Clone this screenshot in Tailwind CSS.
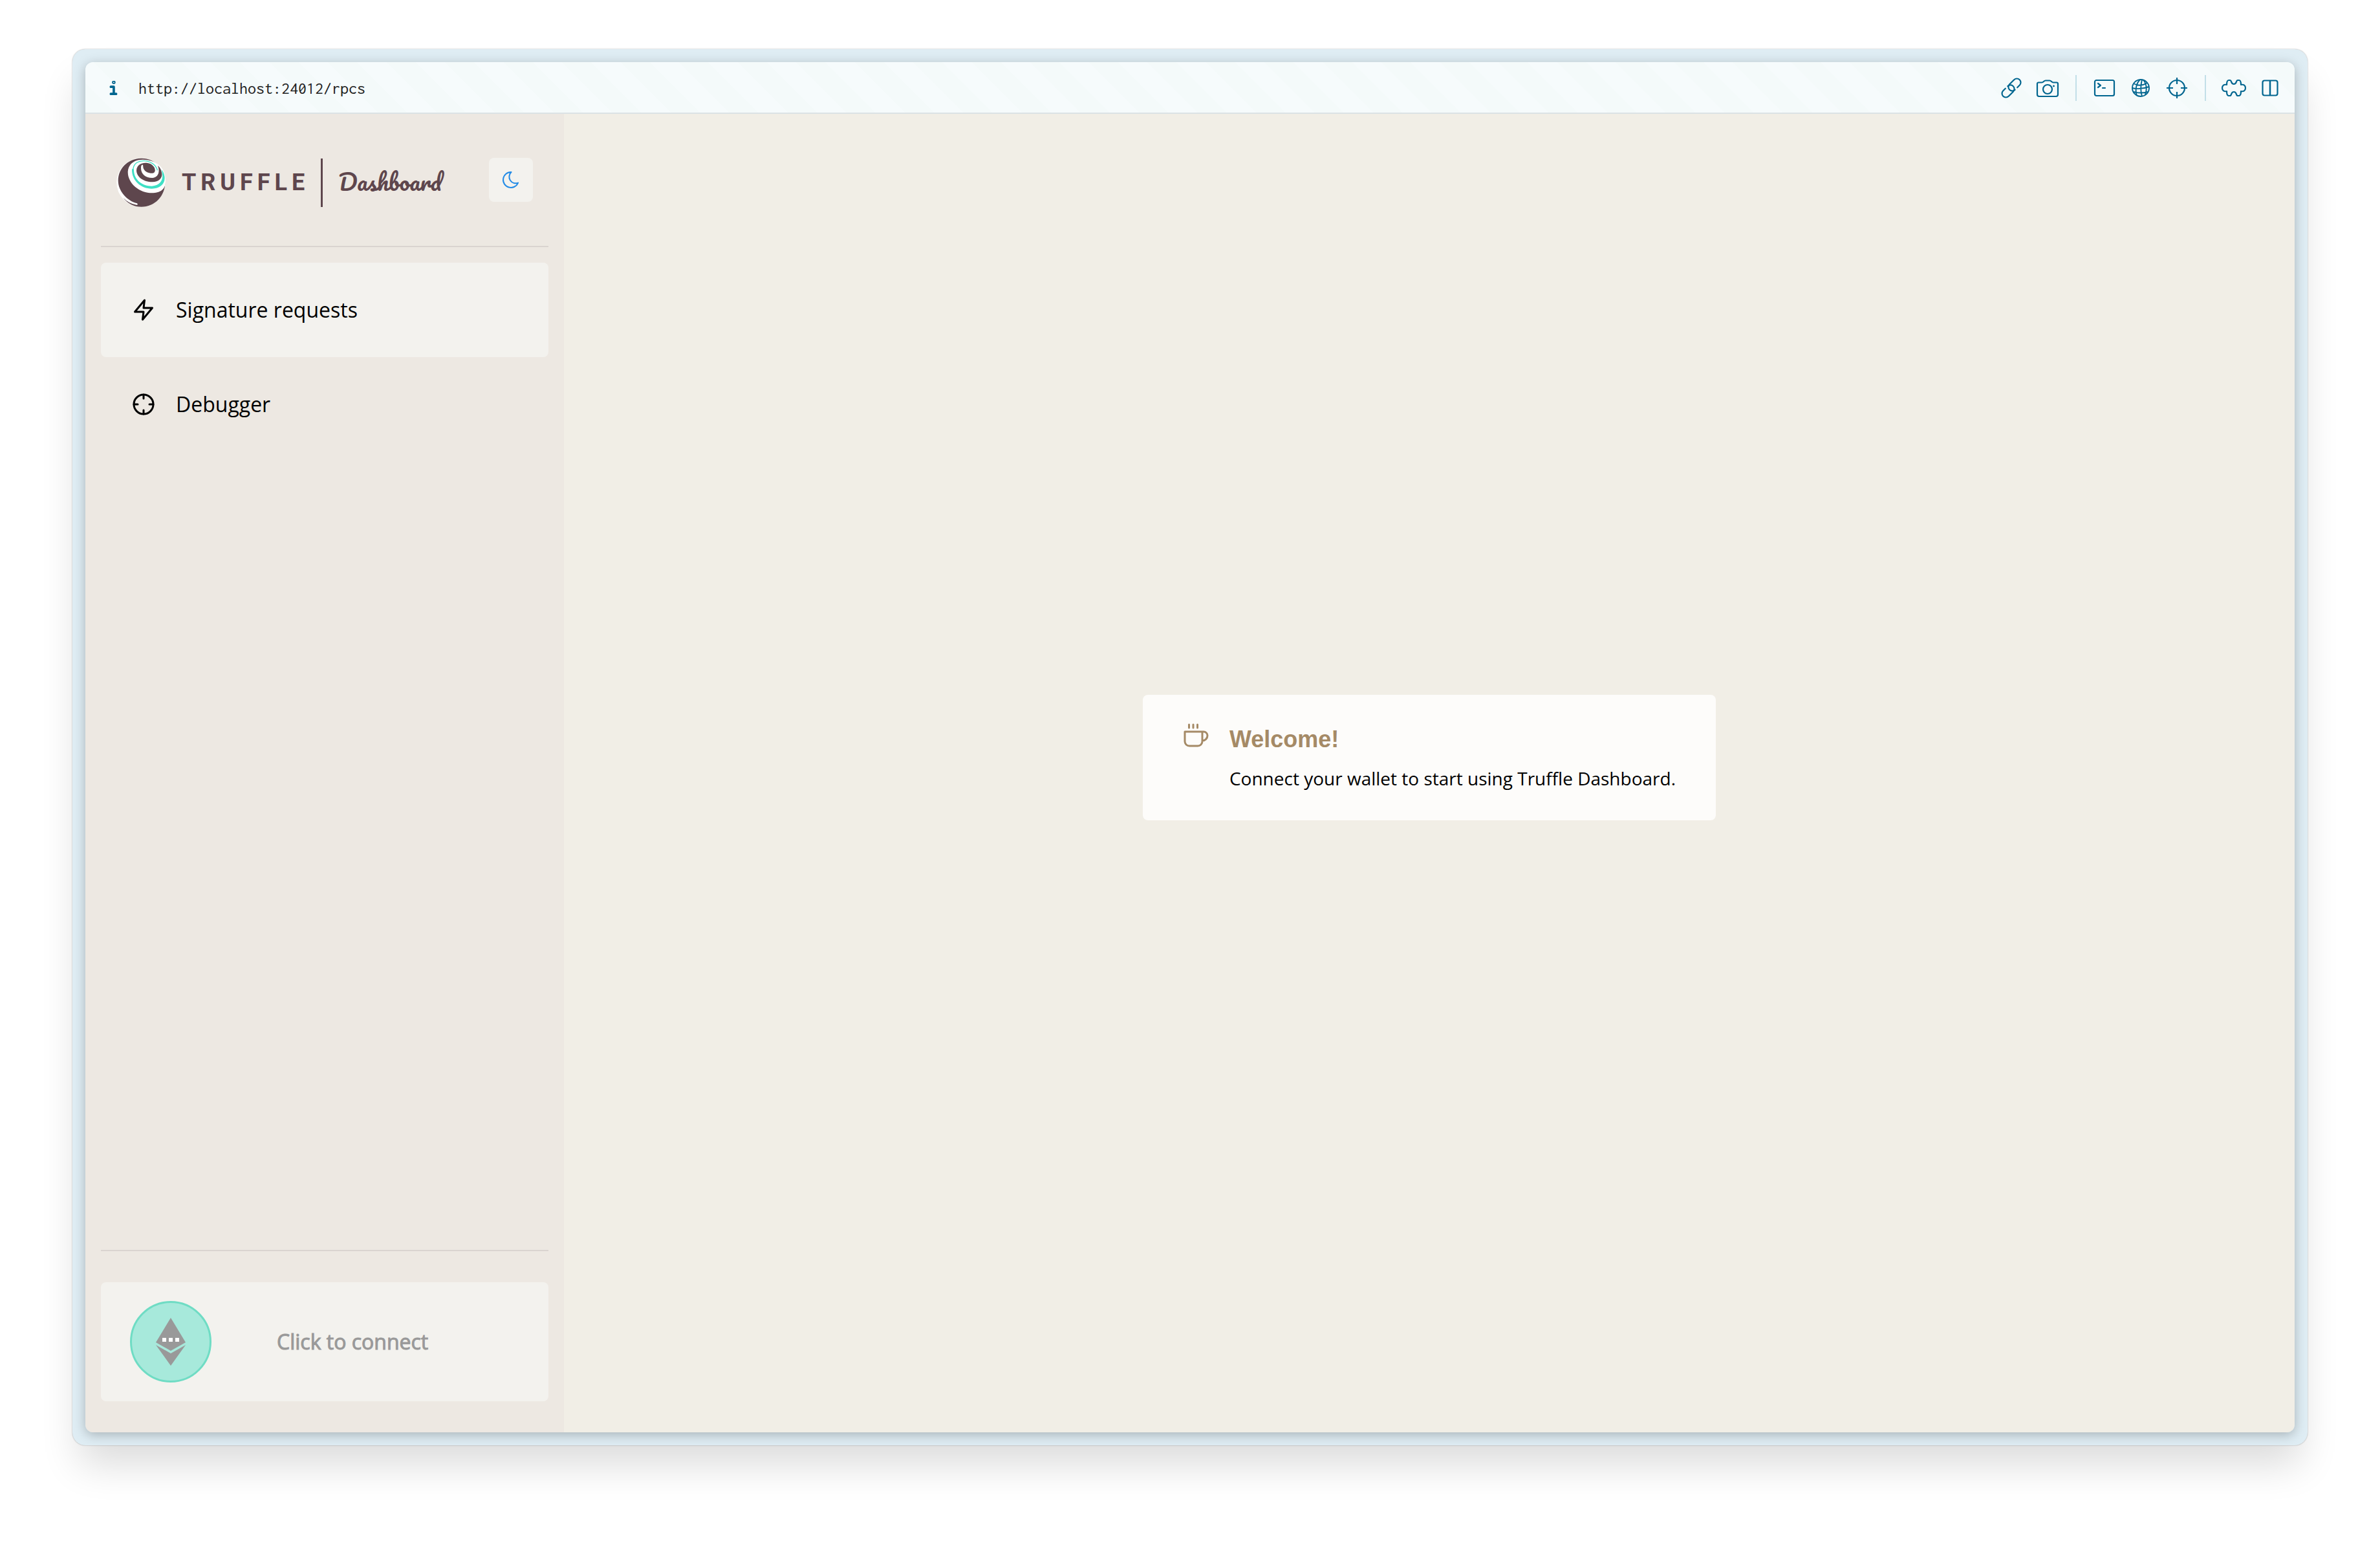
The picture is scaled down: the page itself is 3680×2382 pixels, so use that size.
<!DOCTYPE html>
<html lang="en">
<head>
<meta charset="utf-8">
<title>Truffle Dashboard</title>
<script src="https://cdn.jsdelivr.net/npm/@tailwindcss/browser@4"></script>
</head>
<body class="flex min-h-screen bg-white px-28 pt-[76px] pb-[148px] font-['Open_Sans',sans-serif] text-black">
<div class="flex flex-1 rounded-[20px] bg-[#dfedf4] p-5 shadow-[0_0_2px_rgba(0,0,0,0.35),0_40px_60px_-10px_rgba(0,0,0,0.14)]">
<div class="flex flex-1 flex-col overflow-hidden rounded-xl shadow-[0_4px_18px_rgba(0,0,0,0.25)]">

  <header class="flex h-20 items-center border-b-2 border-[#dbe2e5] bg-[repeating-linear-gradient(45deg,#f4fafa_0_32px,#f6fbfc_32px_64px)] pt-0.5 pr-2.5 pl-8 text-[#00658f]">
    <svg class="mr-7 size-[22px]" viewBox="0 0 22 24" fill="none" stroke="currentColor" stroke-width="4" stroke-linecap="round" stroke-linejoin="round"><path d="M7 10h5v11M7 22h9"/><circle cx="12" cy="2.500" r="1"/></svg>
    <span class="flex-1 font-[Inconsolata,'Liberation_Mono',monospace] text-[26px] text-[#222]">http://localhost:24012/rpcs</span>
    <button aria-label="Link" class="flex w-14 justify-center"><svg class="size-9" viewBox="0 0 36 36" fill="none" stroke="currentColor" stroke-width="2.200" stroke-linecap="round"><g transform="rotate(-45 18 18)"><path d="M25 24h5a6 6 0 0 0 0-12H20a6 6 0 0 0 0 12"/><path d="M11 12H6a6 6 0 0 0 0 12h10a6 6 0 0 0 0-12"/></g></svg></button>
    <button aria-label="Screenshot" class="flex w-14 justify-center"><svg class="size-9" viewBox="0 0 36 36" fill="none" stroke="currentColor" stroke-width="2.200"><path d="M4 9.500h5c3 0 3-3 6-3h6c3 0 3 3 6 3h5a2 2 0 0 1 2 2V28a3 3 0 0 1-3 3H5a3 3 0 0 1-3-3V11.500a2 2 0 0 1 2-2z"/><circle cx="18" cy="20" r="7"/><circle cx="27.500" cy="15" r="1" fill="currentColor" stroke-width="1"/></svg></button>
    <div class="mx-[15px] h-10 w-0.5 bg-[#c2dfe8]"></div>
    <button aria-label="Console" class="flex w-14 justify-center"><svg class="size-9" viewBox="0 0 36 36" fill="none" stroke="currentColor" stroke-width="2.200" stroke-linecap="round" stroke-linejoin="round"><rect x="3" y="6" width="30" height="24" rx="2.500"/><path d="M8 11l4 3-4 3M15 18h4"/></svg></button>
    <button aria-label="Network" class="flex w-14 justify-center"><svg class="size-9" viewBox="0 0 36 36" fill="none" stroke="currentColor" stroke-width="1.900"><circle cx="18" cy="18" r="13"/><path d="M17 5c-6 6-8 16-5 25M20 5c-2 8-3 16 0 26M22 5.500c5 6 6 14 3 23M7 11c7 4 15 3 21-1M5 18c8 2 18 1 26-2M7 24c7 2 15 2 22 0"/></svg></button>
    <button aria-label="Inspect" class="flex w-14 justify-center"><svg class="size-9" viewBox="0 0 36 36" fill="none" stroke="currentColor" stroke-width="2.200"><circle cx="18" cy="18" r="12"/><path d="M18 2v10M18 24v10M2 18h10M24 18h10"/></svg></button>
    <div class="mx-[15px] h-10 w-0.5 bg-[#c2dfe8]"></div>
    <button aria-label="Extensions" class="flex w-14 justify-center"><svg class="h-9 w-10" viewBox="0 0 40 36" fill="none" stroke="currentColor" stroke-width="2.200" stroke-linejoin="round"><path d="M9 13c0-4 1-7 3-7h2c3 0 1 6 6 6s3-6 6-6h2c2 0 3 3 3 7 4-1 7 1 7 5s-3 6-7 5c0 4-1 7-3 7h-2c-3 0-1-6-6-6s-3 6-6 6h-2c-2 0-3-3-3-7-4 1-7-1-7-5s3-6 7-5z"/></svg></button>
    <button aria-label="Split view" class="flex w-14 justify-center"><svg class="size-9" viewBox="0 0 36 36" fill="none" stroke="currentColor" stroke-width="2.200"><rect x="6.500" y="6.500" width="23" height="23" rx="3"/><path d="M18 6v24" stroke-width="2.500"/></svg></button>
  </header>

  <div class="flex flex-1">
    <aside class="flex w-[740px] flex-col bg-[#ede8e2] px-6 pb-12">
      <div class="flex items-start justify-between border-b-2 border-[#dad4d0] px-6 pt-[68px] pb-[60px]">
        <a href="#" class="flex h-[76px] items-center text-[#5e464d]">
          <svg class="size-[76px]" viewBox="90 100 228 228"><circle cx="204" cy="214" r="113" fill="#fff"/><path fill="#5e464d" d="M204 102C140 104 98 152 98 205c0 50 42 95 88 106q6 8-3 7-35-6-62-33Q155 327 206 327c62 0 110-50 110-113S266 100 204 102z"/><path fill="#fff" d="M262 118C200 95 145 115 143 165c0 55 55 98 112 98 35 0 63-15 63-55 0-45-20-75-56-90z"/><path fill="none" stroke="#3fe0c5" stroke-width="4" d="M280 158C268 105 172 95 167 153"/><path fill="#3fe0c5" d="M162 152c-2 52 40 91 92 91 40 0 65-25 59-58-2-15-8-25-15-32 14 40 3 74-44 78-45 0-85-30-83-79z"/><path fill="#5e464d" d="M234 124c-22-3-50 6-51 34 0 32 35 55 75 54 32-1 48-22 42-44-4-18-10-26-18-32 12 32 0 56-26 57-30 0-52-18-52-45 0-12 3-16 6-16 6 0 2 8 6 18 6 14 24 22 42 21 12-2 14-14 8-26-7-12-18-19-32-21z"/></svg>
          <span class="ml-[25px] font-[Roboto,sans-serif] text-4xl font-bold tracking-[7px]">TRUFFLE</span>
          <span class="ml-[18px] h-[75px] w-[3px] bg-[#5e464d]"></span>
          <span class="ml-6 pb-1 font-[Pacifico,cursive] text-[35px]">Dashboard</span>
        </a>
        <button aria-label="Dark mode" class="flex size-[68px] items-center justify-center rounded-lg bg-[#f3f2ee] text-[#228be6]"><svg class="size-8" viewBox="0 0 24 24" fill="none" stroke="currentColor" stroke-width="1.500" stroke-linecap="round" stroke-linejoin="round"><path d="M12 3h.393a7.500 7.500 0 0 0 7.920 12.446A9 9 0 1 1 12 2.992z"/></svg></button>
      </div>
      <nav class="flex flex-1 flex-col pt-6 text-[32px]">
        <a href="#" class="flex h-[146px] items-center gap-8 rounded-lg bg-[#f3f2ee] px-12"><svg class="size-9" viewBox="0 0 24 24" fill="none" stroke="currentColor" stroke-width="2" stroke-linecap="round" stroke-linejoin="round"><path d="M13 2L3 14h9l-1 8 10-12h-9z"/></svg>Signature requests</a>
        <a href="#" class="flex h-[146px] items-center gap-8 rounded-lg px-12"><svg class="size-9" viewBox="0 0 24 24" fill="none" stroke="currentColor" stroke-width="2" stroke-linecap="round"><circle cx="12" cy="12" r="10"/><path d="M22 12h-4M6 12H2M12 6V2M12 22v-4"/></svg>Debugger</a>
      </nav>
      <div class="border-t-2 border-[#dad4d0] pt-12">
        <button class="flex h-[184px] w-full items-center rounded-lg bg-[#f3f2ee] pl-[45px] text-[32px] text-[#999]">
          <span class="flex size-[126px] items-center justify-center rounded-full border-3 border-[#6fdcc4] bg-[#a7e9db]"><svg class="h-[74px] w-[46px]" viewBox="0 0 46 74" fill="#999"><path d="M23 0L46 38 23 51 0 38zM0 42l23 13 23-13-23 32z"/><path fill="#fff" d="M10 31h6v6h-6zM20 31h6v6h-6zM30 31h6v6h-6z"/></svg></span>
          <span class="ml-[101px] [-webkit-text-stroke:1px_#999]">Click to connect</span>
        </button>
      </div>
    </aside>
    <main class="flex flex-1 items-center justify-center bg-[#f1eee6] pb-12">
      <section class="flex h-[194px] gap-8 rounded-lg bg-[#fdfcfa] px-[62px] pt-11">
        <svg class="size-10 text-[#a58a66]" viewBox="0 0 40 40" fill="none" stroke="currentColor" stroke-width="3" stroke-linecap="round" stroke-linejoin="round"><path d="M3 13h27v15a7 7 0 0 1-7 7H10a7 7 0 0 1-7-7zM30 13h2a6 6 0 0 1 6 6 8 8 0 0 1-8 8M9.500 2v5M16 2v5M22.500 2v5"/></svg>
        <div class="pt-px">
          <h1 class="font-['Liberation_Sans',sans-serif] text-4xl leading-[48px] font-bold text-[#a58a66]">Welcome!</h1>
          <p class="mt-4 text-[28px] leading-10">Connect your wallet to start using Truffle Dashboard.</p>
        </div>
      </section>
    </main>
  </div>
</div>
</div>
</body>
</html>
